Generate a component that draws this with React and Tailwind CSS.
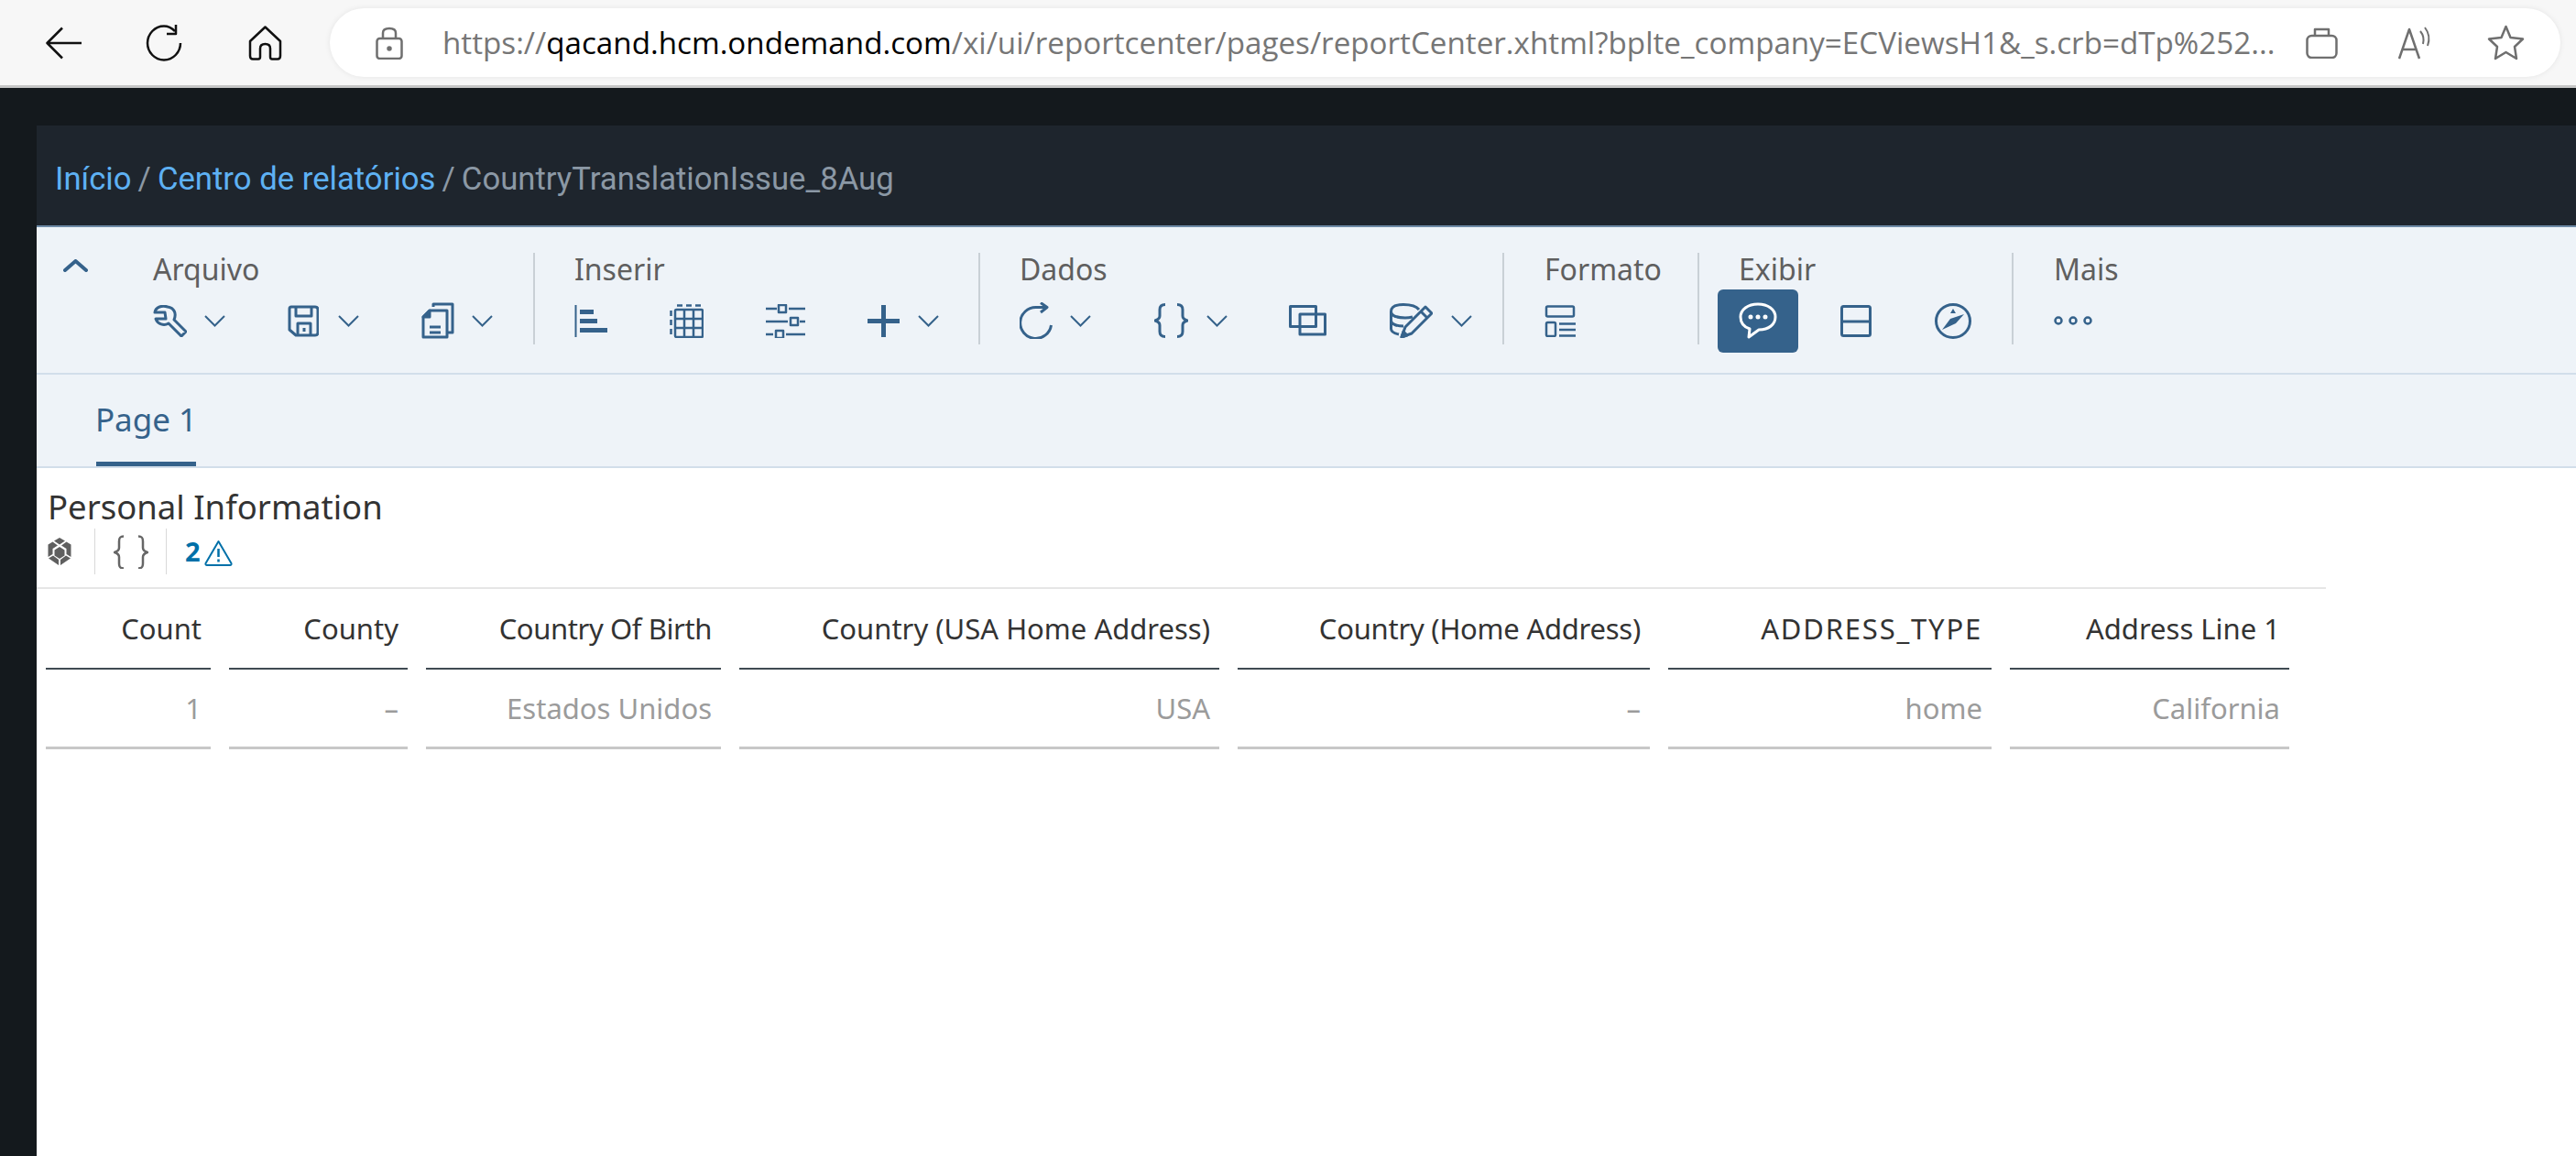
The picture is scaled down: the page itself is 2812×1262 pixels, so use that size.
const font = { fontFamily: '"Noto Sans", sans-serif' };

const Chevron = ({ className = "" }) => (
  <svg width="23" height="13" viewBox="0 0 23 13" fill="none" stroke="#35628b" strokeWidth="2" className={className}>
    <polyline points="1,1 11.5,11.5 22,1" />
  </svg>
);

const Ic = ({ w, h, className = "", stroke = "#35628b", sw = 3, children }) => (
  <svg width={w} height={h} viewBox={`0 0 ${w} ${h}`} fill="none" stroke={stroke} strokeWidth={sw} strokeLinejoin="round" className={`shrink-0 ${className}`}>
    {children}
  </svg>
);

const Sep = () => <div className="w-[2px] h-[100px] mt-[28px] shrink-0 bg-[#c9d0d6]" />;

const Label = ({ children, className = "" }) => (
  <div className={`h-[35px] mb-[19px] text-[32px] leading-[35px] text-[#5f5f5f] whitespace-nowrap ${className}`}>{children}</div>
);

const Row = ({ children }) => <div className="flex items-center h-[40px]">{children}</div>;

const Cell = ({ className, children, tone }) => (
  <div className={`flex items-center justify-end pr-[10px] shrink-0 whitespace-nowrap text-[31px] ${tone} ${className}`}>{children}</div>
);

const columns = [
  { w: "w-[180px]", head: "Count", val: "1" },
  { w: "w-[195px]", head: "County", val: "–" },
  { w: "w-[322px]", head: "Country Of Birth", val: "Estados Unidos", extra: "tracking-[-0.4px]" },
  { w: "w-[524px]", head: "Country (USA Home Address)", val: "USA" },
  { w: "w-[450px]", head: "Country (Home Address)", val: "–", extra: "tracking-[-0.25px]" },
  { w: "w-[353px]", head: "ADDRESS_TYPE", val: "home", extra: "tracking-[1.8px]" },
  { w: "w-[305px]", head: "Address Line 1", val: "California" },
];

export default function App() {
  return (
    <div className="w-[2812px] h-[1262px] overflow-hidden bg-[#14191d]" style={font}>
      {/* browser bar */}
      <div className="h-[96px] border-b-[3px] border-[#c6c6c6] bg-[#f7f7f7] flex items-center">
        <Ic w={40} h={36} stroke="#111" sw={2.5} className="ml-[50px]">
          <path d="M39 18H2M18 1.5L1.5 18L18 34.5" />
        </Ic>
        <Ic w={41} h={40} stroke="#111" sw={2.5} className="ml-[69px]">
          <path d="M32 7C28 3 24 1.5 20 1.5C10 1.5 2 10 2 20C2 30 10 38.5 20 38.5C30 38.5 38 30 38 20" />
          <path d="M33 0V10H23" />
        </Ic>
        <Ic w={37} h={38} stroke="#111" sw={2.5} className="ml-[71px]">
          <path d="M18.5 1.5L2 17V33Q2 36.5 5 36.5H11Q13 36.5 13 34V25Q13 20 18.5 20Q24 20 24 25V34Q24 36.5 26 36.5H32Q35 36.5 35 33V17Z" />
        </Ic>
        <div className="ml-[52px] w-[2435px] h-[75px] rounded-[38px] bg-white shadow-[0_0_6px_rgba(0,0,0,0.08)] flex items-center">
          <Ic w={30} h={36} stroke="#6f6f6f" sw={2.5} className="ml-[50px]">
            <rect x="1.5" y="13" width="27" height="22" rx="3" />
            <path d="M8 13V7Q8 2 15 2Q22 2 22 7V13" />
            <circle cx="15" cy="24" r="1.5" fill="#6f6f6f" />
          </Ic>
          <div className="ml-[43px] w-[2002px] text-[33.2px] text-[#767676] whitespace-nowrap" style={{ fontFamily: '"Open Sans", sans-serif' }}>
            https://<span className="text-black">qacand.hcm.ondemand.com</span>/xi/ui/reportcenter/pages/reportCenter.xhtml?bplte_company=ECViewsH1&amp;_s.crb=dTp%252...
          </div>
          <Ic w={35} h={34} stroke="#6f6f6f" sw={2.5} className="ml-[32px]">
            <rect x="1.5" y="9" width="32" height="24" rx="5" />
            <path d="M10 9V2H25V9" />
          </Ic>
          <Ic w={38} h={36} stroke="#6f6f6f" sw={2.5} className="ml-[66px]">
            <path d="M1 35L12 3L23 35M5 25H19" />
            <path d="M24 5Q29 11 27 19M29 1Q36 10 32 21" strokeWidth="2" />
          </Ic>
          <Ic w={41} h={39} stroke="#6f6f6f" sw={2.5} className="ml-[59px]">
            <path d="M20.5 2L25.5 14L39 15.5L30 24L32 37L20.5 30L9 37L11 24L2 15.5L15.5 14Z" />
          </Ic>
        </div>
      </div>

      <div className="pl-[40px] pt-[41px]">
        {/* breadcrumb */}
        <div className="h-[111px] bg-[#1e252d] border-b-[2px] border-[#6d8aa6] flex items-center pl-[20px] pt-[8px] text-[34.7px] whitespace-nowrap" style={{ fontFamily: 'Roboto, sans-serif' }}>
          <span className="text-[#5eb1f3]">Início</span>
          <span className="text-[#8b98a5] mx-[7px]">/</span>
          <span className="text-[#5eb1f3]">Centro de relatórios</span>
          <span className="text-[#8b98a5] mx-[7px]">/</span>
          <span className="text-[#8b98a5]">CountryTranslationIssue_8Aug</span>
        </div>

        {/* toolbar */}
        <div className="h-[161px] bg-[#eef3f8] border-b-[2px] border-[#d2deea] flex">
          <div className="w-[127px] pl-[29px] pt-[35px] shrink-0">
            <Ic w={27} h={14} sw={4}>
              <path d="M2 12L13.5 2L25 12" strokeLinecap="round" />
            </Ic>
          </div>

          <div className="w-[415px] pt-[28px] shrink-0">
            <Label>Arquivo</Label>
            <Row>
              <Ic w={37} h={35}>
                <path d="M16 2C10 0 3 2 2 8L13 8L14 15L3 15C5 21 12 23 17 20L31 34L36 29L23 16C26 9 23 3 16 2Z" />
              </Ic>
              <Chevron className="ml-[19px]" />
              <Ic w={34} h={35} className="ml-[68px]">
                <path d="M4 2H30Q33 2 33 5V30Q33 33 30 33H9L2 27V4Q2 2 4 2Z" />
                <path d="M9 2V12H26V2M11 33V20H25V33" />
                <path d="M18 25V29" />
              </Ic>
              <Chevron className="ml-[21px]" />
              <Ic w={36} h={40} className="ml-[68px]">
                <path d="M13 5V2H34V33H29" />
                <path d="M9 9H28V38H2V16Z" />
                <path d="M2 16L9 9V16Z" fill="#35628b" />
                <path d="M9 27H21M9 33H21" />
              </Ic>
              <Chevron className="ml-[19px]" />
            </Row>
          </div>
          <Sep />

          <div className="w-[484px] pl-[43px] pt-[28px] shrink-0">
            <Label>Inserir</Label>
            <Row>
              <Ic w={36} h={37}>
                <path d="M1.5 1V36" strokeWidth="2" />
                <path d="M6 8.5H21M6 18.5H25M6 28.5H36" strokeWidth="5" />
              </Ic>
              <Ic w={37} h={37} className="ml-[68px]" sw={2.5}>
                <rect x="6" y="6" width="30" height="30" rx="1.5" />
                <path d="M16 6V36M26 6V36M6 16H36M6 26H36" />
                <path d="M8 1.5H36M1.5 7V36" strokeDasharray="6 4" />
              </Ic>
              <Ic w={43} h={37} className="ml-[68px]" sw={2.5}>
                <path d="M0 5H12M25 5H43M0 19H24M37 19H43M0 33H8M22 33H43" />
                <rect x="14" y="1" width="8" height="8" />
                <rect x="27" y="15" width="8" height="8" />
                <rect x="11" y="29" width="8" height="8" />
              </Ic>
              <Ic w={35} h={35} className="ml-[68px]" sw={5}>
                <path d="M0 17.5H35M17.5 0V35" />
              </Ic>
              <Chevron className="ml-[20px]" />
            </Row>
          </div>
          <Sep />

          <div className="w-[570px] pl-[43px] pt-[28px] shrink-0">
            <Label>Dados</Label>
            <Row>
              <Ic w={38} h={40}>
                <path d="M30 5.5H18A17 17 0 1 0 34.5 25" />
                <path d="M23 0.5L30 5.5L23 11" />
              </Ic>
              <Chevron className="ml-[17px]" />
              <Ic w={37} h={38} className="ml-[69px]">
                <path d="M12 1.5C8 1.5 6 3 6 7V14C6 17 4 18 1 19C4 20 6 21 6 24V31C6 35 8 36.5 12 36.5" />
                <path d="M25 1.5C29 1.5 31 3 31 7V14C31 17 33 18 36 19C33 20 31 21 31 24V31C31 35 29 36.5 25 36.5" />
              </Ic>
              <Chevron className="ml-[20px]" />
              <Ic w={41} h={34} className="ml-[67px]">
                <rect x="1.5" y="1.5" width="28" height="22" />
                <rect x="12" y="10" width="27.5" height="22" />
              </Ic>
              <Ic w={47} h={38} className="ml-[69px]">
                <path d="M32 7C29 3 22 1.5 15 1.5C7 1.5 1.5 4 1.5 9V28C1.5 31 5 33 10 34" />
                <path d="M1.5 9C1.5 14 9 16 17 16C20 16 23 15.5 25 15M1.5 19C1.5 23 8 25 15 25" />
                <path d="M13 37L17 26L39 4L46 11L24 33Z" />
                <path d="M34 9L41 16" />
                <path d="M13 37L15 31L19 35Z" fill="#35628b" />
              </Ic>
              <Chevron className="ml-[20px]" />
            </Row>
          </div>
          <Sep />

          <div className="w-[211px] pl-[44px] pt-[28px] shrink-0">
            <Label>Formato</Label>
            <Row>
              <Ic w={34} h={35} sw={2.5}>
                <rect x="2" y="1.5" width="30" height="11" rx="1.5" />
                <rect x="2" y="19" width="10" height="15" rx="1.5" />
                <path d="M16 20.5H34M16 27H34M16 33.5H34" />
              </Ic>
            </Row>
          </div>
          <Sep />

          <div className="w-[341px] pl-[20px] pt-[28px] shrink-0">
            <Label className="ml-[23px]">Exibir</Label>
            <Row>
              <div className="w-[88px] h-[69px] rounded-[6px] bg-[#35628b] flex items-center justify-center shrink-0">
                <Ic w={42} h={40} stroke="#fff">
                  <path d="M21 2C10 2 2 8 2 16C2 23 6 27 12 29L11 38L22 30C33 30 40 24 40 16C40 8 32 2 21 2Z" />
                  <circle cx="13" cy="16" r="1" fill="#fff" />
                  <circle cx="21" cy="16" r="1" fill="#fff" />
                  <circle cx="29" cy="16" r="1" fill="#fff" />
                </Ic>
              </div>
              <Ic w={34} h={35} className="ml-[46px]">
                <rect x="1.5" y="1.5" width="31" height="32" rx="2" />
                <path d="M1.5 18H32.5" />
              </Ic>
              <Ic w={40} h={39} className="ml-[69px]">
                <ellipse cx="20" cy="19.5" rx="18.5" ry="18" />
                <path d="M8 29L17 17L32 12L23 22Z" fill="#35628b" stroke="none" />
                <path d="M20 6L23 11H17Z" fill="#35628b" stroke="none" />
              </Ic>
            </Row>
          </div>
          <Sep />

          <div className="pl-[44px] pt-[28px]">
            <Label>Mais</Label>
            <Row>
              <Ic w={42} h={10} sw={2.5}>
                <circle cx="5" cy="5" r="3.5" />
                <circle cx="21" cy="5" r="3.5" />
                <circle cx="37" cy="5" r="3.5" />
              </Ic>
            </Row>
          </div>
        </div>

        {/* tabs */}
        <div className="h-[102px] bg-[#eef3f8] border-b-[2px] border-[#d2deea] pl-[65px] flex">
          <div className="w-[109px] border-b-[5px] border-[#35628b] flex items-center justify-center pt-[4px] text-[35px] text-[#35628b] whitespace-nowrap">
            Page 1
          </div>
        </div>

        {/* report */}
        <div className="h-[751px] bg-white">
          <div className="pl-[12px] pt-[18px] text-[36.5px] leading-[48px] text-[#333] whitespace-nowrap">Personal Information</div>
          <div className="h-[50px] pl-[12px] flex items-center">
            <Ic w={26} h={30} stroke="none">
              <path d="M13 0L19 3.5L13 7.5L7 3.5Z M0.5 7.5L5.5 4.5L11 8.5L5.5 12L5.5 18L0.5 21Z M25.5 7.5L20.5 4.5L15 8.5L20.5 12L20.5 18L25.5 21Z M13 10L18.5 13.5V19.5L13 23L7.5 19.5V13.5Z M1 22.5L6 19.5L12 24V30Z M25 22.5L20 19.5L14 24V30Z" fill="#5f5f5f" />
            </Ic>
            <div className="w-[1px] h-[50px] ml-[25px] bg-[#d9d9d9]" />
            <Ic w={38} h={37} stroke="#666" sw={2.5} className="ml-[20px]">
              <path d="M11 1.5C7 1.5 6 3 6 7V14C6 17 4 18 1 19C4 20 6 21 6 24V31C6 35 7 36.5 11 36.5" />
              <path d="M27 1.5C31 1.5 32 3 32 7V14C32 17 34 18 37 19C34 20 32 21 32 24V31C32 35 31 36.5 27 36.5" />
            </Ic>
            <div className="w-[1px] h-[50px] ml-[19px] bg-[#d9d9d9]" />
            <span className="ml-[20px] text-[29px] font-bold text-[#0070a8]">2</span>
            <Ic w={31} h={29} stroke="#0070a8" sw={2} className="ml-[4px] mt-[2px]">
              <path d="M15.5 2L29.5 26Q30 28 28 28H3Q1 28 1.5 26Z" />
              <path d="M15.5 10V19M15.5 21.5V24.5" strokeWidth="2.5" />
            </Ic>
          </div>
          <div className="mt-[14px] w-[2499px] h-[2px] bg-[#e6e6e6]" />
          <div className="pl-[10px] flex gap-[20px]">
            {columns.map((c) => (
              <div key={c.head} className="flex flex-col shrink-0">
                <Cell className={`${c.w} h-[88px] border-b-[2px] border-[#3f4a52] ${c.extra || ""}`} tone="text-[#333]">{c.head}</Cell>
                <Cell className={`${c.w} h-[87px] border-b-[3px] border-[#c8c8c8]`} tone="text-[#9b9b9b]">{c.val}</Cell>
              </div>
            ))}
          </div>
        </div>
      </div>
    </div>
  );
}
